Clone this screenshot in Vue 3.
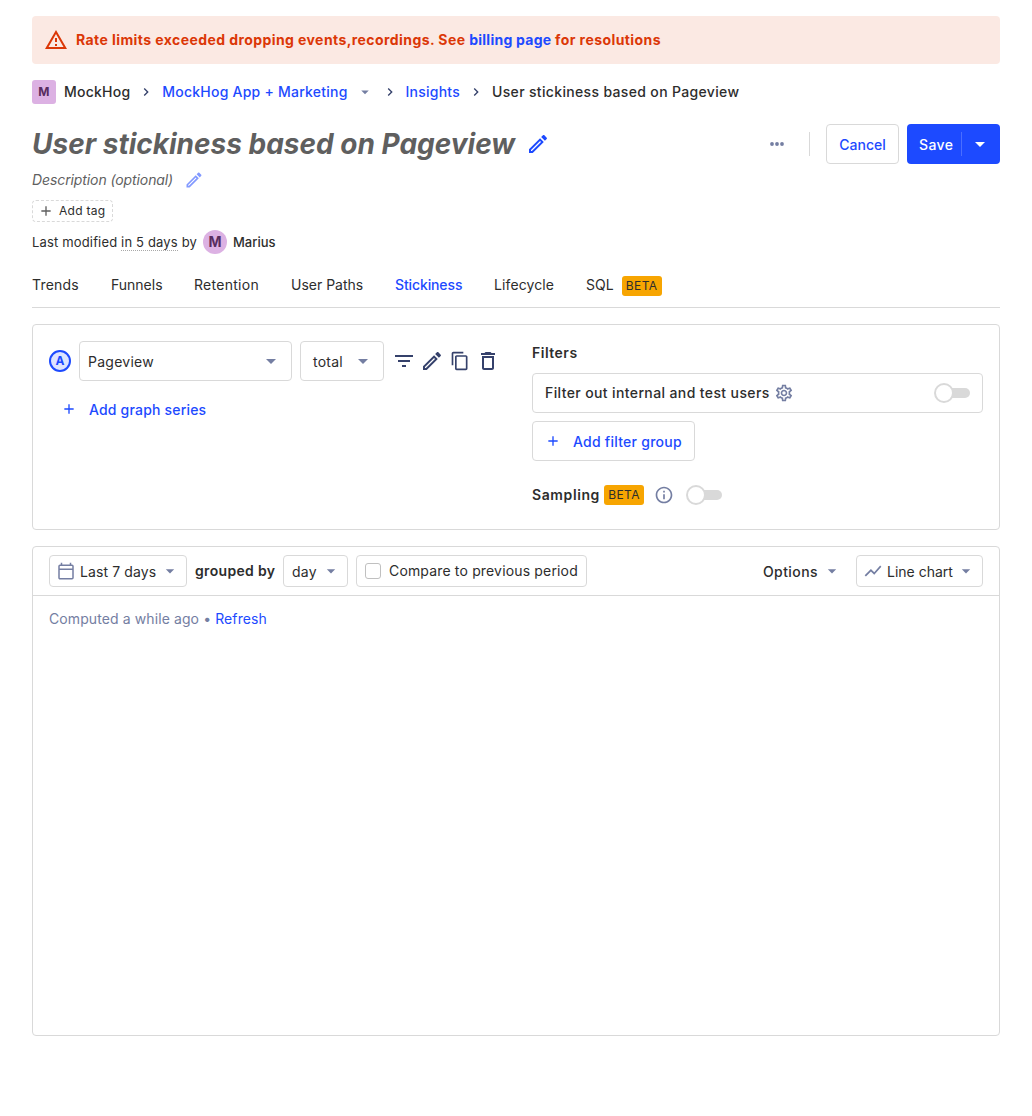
<script setup>
const tabs = ['Trends', 'Funnels', 'Retention', 'User Paths', 'Stickiness', 'Lifecycle', 'SQL']
const activeTab = 'Stickiness'

const pencil = 'M14.06 9l.94.94L5.92 19H5v-.92L14.06 9m3.6-6c-.25 0-.51.1-.7.29l-1.83 1.83 3.75 3.75 1.83-1.83c.39-.39.39-1.04 0-1.41l-2.34-2.34c-.2-.2-.45-.29-.71-.29m-3.6 3.19L3 17.25V21h3.75L17.81 9.94l-3.75-3.75z'
const caret = 'M7 10l5 5 5-5z'
const plus = 'M19 13h-6v6h-2v-6H5v-2h6V5h2v6h6v2z'
const chevron = 'M8.59 16.59L13.17 12 8.59 7.41 10 6l6 6-6 6z'
</script>

<template>
  <div class="scene">
    <div class="banner">
      <svg class="i24" viewBox="0 0 24 24"><path d="M12 5.99L19.53 19H4.47L12 5.99M12 2L1 21h22L12 2zm1 14h-2v2h2v-2zm0-6h-2v4h2v-4z" /></svg>
      <div class="banner-text">Rate limits exceeded dropping events,recordings. See <a>billing page</a> for resolutions</div>
    </div>

    <nav class="crumbs">
      <span class="lettermark">M</span>
      <span class="org">MockHog</span>
      <svg class="chev" viewBox="0 0 24 24"><path :d="chevron" /></svg>
      <a>MockHog App + Marketing</a>
      <svg class="crumb-caret" viewBox="0 0 24 24"><path :d="caret" /></svg>
      <svg class="chev after-caret" viewBox="0 0 24 24"><path :d="chevron" /></svg>
      <a>Insights</a>
      <svg class="chev" viewBox="0 0 24 24"><path :d="chevron" /></svg>
      <span class="here">User stickiness based on Pageview</span>
    </nav>

    <header class="title-row">
      <h1>User stickiness based on Pageview</h1>
      <svg class="i24 title-edit" viewBox="0 0 24 24"><path :d="pencil" /></svg>
      <div class="actions">
        <svg class="i20 more" viewBox="0 0 20 20"><circle cx="5" cy="10" r="1.9" /><circle cx="10" cy="10" r="1.9" /><circle cx="15" cy="10" r="1.9" /></svg>
        <span class="divider"></span>
        <button class="btn cancel">Cancel</button>
        <button class="btn save">
          <span class="save-label">Save</span>
          <span class="save-side"><svg class="i24" viewBox="0 0 24 24"><path :d="caret" /></svg></span>
        </button>
      </div>
    </header>

    <div class="description">
      <i>Description (optional)</i>
      <svg class="i20" viewBox="0 0 24 24"><path :d="pencil" /></svg>
    </div>

    <div class="tag">
      <svg viewBox="0 0 24 24"><path :d="plus" /></svg>
      <span>Add tag</span>
    </div>

    <div class="modified">
      <span>Last modified <span class="dotted">in 5 days</span> by</span>
      <span class="avatar">M</span>
      <b>Marius</b>
    </div>

    <div class="tabs">
      <div v-for="t in tabs" :key="t" class="tab" :class="[t.toLowerCase().replace(' ', '-'), { active: t === activeTab }]">
        {{ t }}<span v-if="t === 'SQL'" class="beta">BETA</span>
      </div>
    </div>

    <section class="panel query">
      <div class="series-col">
        <div class="series">
          <span class="letter">A</span>
          <div class="select event"><span>Pageview</span><svg class="i24" viewBox="0 0 24 24"><path :d="caret" /></svg></div>
          <div class="select math"><span>total</span><svg class="i24" viewBox="0 0 24 24"><path :d="caret" /></svg></div>
          <div class="series-icons">
            <svg class="i24" viewBox="0 0 24 24"><path d="M10 18h4v-2h-4v2zM3 6v2h18V6H3zm3 7h12v-2H6v2z" /></svg>
            <svg class="i24" viewBox="0 0 24 24"><path :d="pencil" /></svg>
            <svg class="i20" viewBox="0 0 24 24"><path d="M16 1H4c-1.1 0-2 .9-2 2v14h2V3h12V1zm3 4H8c-1.1 0-2 .9-2 2v14c0 1.1.9 2 2 2h11c1.1 0 2-.9 2-2V7c0-1.1-.9-2-2-2zm0 16H8V7h11v14z" /></svg>
            <svg class="i24" viewBox="0 0 24 24"><path d="M6 19c0 1.1.9 2 2 2h8c1.1 0 2-.9 2-2V7H6v12zM8 9h8v10H8V9zm7.5-5l-1-1h-5l-1 1H5v2h14V4h-3.5z" /></svg>
          </div>
        </div>
        <div class="add-series">
          <svg class="plus" viewBox="0 0 24 24"><path :d="plus" /></svg>
          <span>Add graph series</span>
        </div>
      </div>

      <div class="filter-col">
        <b class="heading">Filters</b>
        <div class="internal">
          <span class="internal-label">Filter out internal and test users</span>
          <svg class="i20 gear" viewBox="0 0 24 24"><path d="M19.43 12.98c.04-.32.07-.64.07-.98 0-.34-.03-.66-.07-.98l2.11-1.65c.19-.15.24-.42.12-.64l-2-3.46c-.09-.16-.26-.25-.44-.25-.06 0-.12.01-.17.03l-2.49 1c-.52-.4-1.08-.73-1.69-.98l-.38-2.65C14.46 2.18 14.25 2 14 2h-4c-.25 0-.46.18-.49.42l-.38 2.65c-.61.25-1.17.59-1.69.98l-2.49-1c-.06-.02-.12-.03-.18-.03-.17 0-.34.09-.43.25l-2 3.46c-.13.22-.07.49.12.64l2.11 1.65c-.04.32-.07.65-.07.98 0 .33.03.66.07.98l-2.11 1.65c-.19.15-.24.42-.12.64l2 3.46c.09.16.26.25.44.25.06 0 .12-.01.17-.03l2.49-1c.52.4 1.08.73 1.69.98l.38 2.65c.03.24.24.42.49.42h4c.25 0 .46-.18.49-.42l.38-2.65c.61-.25 1.17-.59 1.69-.98l2.49 1c.06.02.12.03.18.03.17 0 .34-.09.43-.25l2-3.46c.12-.22.07-.49-.12-.64l-2.11-1.65zm-1.98-1.71c.04.31.05.52.05.73 0 .21-.02.43-.05.73l-.14 1.13.89.7 1.08.84-.7 1.21-1.27-.51-1.04-.42-.9.68c-.43.32-.84.56-1.25.73l-1.06.43-.16 1.13-.2 1.35h-1.4l-.19-1.35-.16-1.13-1.06-.43c-.43-.18-.83-.41-1.23-.71l-.91-.7-1.06.43-1.27.51-.7-1.21 1.08-.84.89-.7-.14-1.13c-.03-.31-.05-.54-.05-.74s.02-.43.05-.73l.14-1.13-.89-.7-1.08-.84.7-1.21 1.27.51 1.04.42.9-.68c.43-.32.84-.56 1.25-.73l1.06-.43.16-1.13.2-1.35h1.39l.19 1.35.16 1.13 1.06.43c.43.18.83.41 1.23.71l.91.7 1.06-.43 1.27-.51.7 1.21-1.07.85-.89.7.14 1.13zM12 8c-2.21 0-4 1.79-4 4s1.79 4 4 4 4-1.79 4-4-1.79-4-4-4zm0 6c-1.1 0-2-.9-2-2s.9-2 2-2 2 .9 2 2-.9 2-2 2z" /></svg>
          <span class="switch push"><span class="knob"></span></span>
        </div>
        <div class="add-filter">
          <svg class="plus" viewBox="0 0 24 24"><path :d="plus" /></svg>
          <span>Add filter group</span>
        </div>
        <div class="sampling">
          <b>Sampling</b>
          <span class="beta">BETA</span>
          <svg class="i20 info" viewBox="0 0 24 24"><path d="M11 7h2v2h-2V7zm0 4h2v6h-2v-6zm1-9C6.48 2 2 6.48 2 12s4.48 10 10 10 10-4.48 10-10S17.52 2 12 2zm0 18c-4.41 0-8-3.59-8-8s3.59-8 8-8 8 3.59 8 8-3.59 8-8 8z" /></svg>
          <span class="switch"><span class="knob"></span></span>
        </div>
      </div>
    </section>

    <section class="panel results">
      <div class="toolbar">
        <div class="small date">
          <svg class="i20 calendar" viewBox="0 0 24 24"><rect x="3.6" y="5" width="16.8" height="16.2" rx="1.2" /><path d="M3.6 9.8h16.8M6.6 2v3M17.4 2v3" /></svg>
          <span>Last 7 days</span>
          <svg class="i20 caret" viewBox="0 0 24 24"><path :d="caret" /></svg>
        </div>
        <b class="grouped">grouped by</b>
        <div class="small day"><span>day</span><svg class="i20 caret" viewBox="0 0 24 24"><path :d="caret" /></svg></div>
        <div class="small compare"><span class="checkbox"></span><span class="compare-label">Compare to previous period</span></div>
        <div class="options"><span>Options</span><svg class="i20 caret" viewBox="0 0 24 24"><path :d="caret" /></svg></div>
        <div class="small chart">
          <svg class="i20" viewBox="0 0 24 24"><path d="M3.5 18.49l6-6.01 4 4L22 6.92l-1.41-1.41-7.09 7.97-4-4L2 16.99z" /></svg>
          <span>Line chart</span>
          <svg class="i20 caret" viewBox="0 0 24 24"><path :d="caret" /></svg>
        </div>
      </div>
      <div class="computed">Computed a while ago <span>•</span> <a>Refresh</a></div>
    </section>
  </div>
</template>

<style>
body { margin: 0; background: #fff; }
</style>

<style scoped>
.scene { box-sizing: border-box; padding: 16px 32px 80px; width: 1032px; height: 1116px; font: 14px/20px Inter, sans-serif; color: #2d2d2d; white-space: nowrap; }
.scene * { box-sizing: border-box; }
svg { display: block; flex: none; fill: currentColor; }
a { color: #1d4aff; }
.i24 { width: 24px; height: 24px; }
.i20 { width: 20px; height: 20px; }
b { font-weight: 600; }

.banner { display: flex; align-items: center; height: 48px; padding: 0 12px; border-radius: 4px; background: #fbe9e3; color: #db3707; font-weight: 700; }
.banner-text { margin-left: 8px; letter-spacing: 0.42px; }
.banner-text a { letter-spacing: 0.25px; }

.crumbs { display: flex; align-items: center; height: 24px; margin-top: 16px; font-weight: 500; letter-spacing: 0.23px; }
.lettermark { width: 24px; height: 24px; border-radius: 3px; background: #dcb1e3; color: #572c5f; font-size: 12px; font-weight: 700; line-height: 24px; text-align: center; }
.org { margin-left: 8px; }
.here { letter-spacing: 0.34px; }
.chev { width: 16px; height: 16px; margin: 0 8px; color: #35416b; }
.crumb-caret { width: 18px; height: 18px; margin-left: 8px; color: #747ea2; }
.after-caret { margin-left: 8px; }

.title-row { display: flex; align-items: center; height: 40px; margin-top: 20px; }
h1 { margin: 0; font-size: 28px; font-weight: 700; font-style: italic; line-height: 40px; color: #5f5f5f; }
.title-edit { margin-left: 11px; color: #1d4aff; }
.actions { display: flex; align-items: center; margin-left: auto; }
.more { color: #747ea2; margin-right: 22px; }
.divider { width: 1px; height: 24px; background: #d9d9d9; margin-right: 16px; }
.btn { display: flex; align-items: center; height: 40px; padding: 2px 0 0; border-radius: 4px; font: 500 14px/20px Inter, sans-serif; }
.cancel { justify-content: center; width: 73px; border: 1px solid #d9d9d9; background: #fff; color: #1d4aff; }
.save { width: 93px; margin-left: 8px; padding: 0; border: 0; background: #1d4aff; color: #fff; }
.save-label { width: 54px; padding: 2px 0 0 12px; text-align: left; letter-spacing: 0.4px; }
.save-side { display: flex; align-items: center; width: 39px; height: 24px; padding-left: 6px; border-left: 1px solid #4a6eff; }

.description { display: flex; align-items: center; height: 20px; margin-top: 6px; color: #5f5f5f; letter-spacing: -0.1px; }
.description svg { margin-left: 11px; color: #8299ff; }
.tag { display: flex; align-items: center; width: 81px; height: 22px; margin-top: 10px; padding-left: 5px; border: 1px dashed #d9d9d9; border-radius: 4px; font-size: 12px; letter-spacing: 0.28px; }
.tag svg { width: 16px; height: 16px; margin-right: 5px; color: #5f5f5f; }
.modified { display: flex; align-items: center; height: 24px; margin-top: 8px; font-size: 13px; letter-spacing: 0.16px; }
.dotted { border-bottom: 1px dotted #a8a8a8; }
.avatar { width: 24px; height: 24px; margin: 0 6px; border-radius: 50%; background: #dcb1e3; color: #572c5f; font-size: 14px; font-weight: 700; line-height: 24px; text-align: center; letter-spacing: 0; }
.modified b { font-weight: 500; letter-spacing: 0; }

.tabs { display: flex; gap: 32px; height: 46px; margin-top: 8px; padding-top: 13px; border-bottom: 1px solid #d9d9d9; }
.tab { display: flex; height: 20px; }
.tab .beta { margin: 1px 0 0 8px; }
.trends { width: 47px; letter-spacing: 0.2px; }
.funnels { width: 51px; }
.retention { width: 65px; letter-spacing: 0.28px; }
.user-paths { width: 72px; }
.stickiness { width: 67px; letter-spacing: -0.12px; }
.lifecycle { width: 60px; letter-spacing: 0.1px; }
.active { color: #1d4aff; font-weight: 500; }
.beta { width: 40px; height: 20px; border-radius: 3px; background: #f7a501; color: #2d2d2d; font-size: 12px; line-height: 20px; text-align: center; letter-spacing: 0.4px; }

.panel { border: 1px solid #d9d9d9; border-radius: 4px; margin-top: 16px; }
.query { display: flex; height: 206px; padding: 16px; }
.series-col { width: 483px; }
.series { display: flex; align-items: center; height: 40px; }
.letter { width: 22px; height: 22px; border: 2px solid #1d4aff; border-radius: 50%; background: #dde4ff; color: #1d4aff; font-size: 12px; font-weight: 700; line-height: 18px; text-align: center; }
.select { display: flex; align-items: center; justify-content: space-between; height: 40px; margin-left: 8px; border: 1px solid #d9d9d9; border-radius: 4px; letter-spacing: 0.25px; }
.select span { padding-top: 2px; }
.select svg, .caret { color: #747ea2; }
.event { width: 213px; padding: 0 8px; }
.math { width: 84px; padding: 0 8px 0 12px; }
.series-icons { display: flex; align-items: center; margin-left: 8px; gap: 4px; color: #35416b; }
.series-icons .i20 { margin: 0 2px; }
.add-series { display: flex; align-items: center; height: 40px; margin-top: 8px; padding-left: 12px; color: #1d4aff; font-weight: 500; letter-spacing: 0.19px; }
.plus { width: 16px; height: 16px; margin-right: 12px; }
.add-series span, .add-filter span { padding-top: 2px; }

.filter-col { flex: 1; }
.heading { display: block; height: 20px; margin: 2px 0 10px; letter-spacing: 0.5px; }
.internal { display: flex; align-items: center; height: 40px; padding: 0 12px; border: 1px solid #d9d9d9; border-radius: 4px; font-weight: 500; }
.internal-label { letter-spacing: 0.38px; }
.gear { margin-left: 4px; color: #747ea2; }
.switch { position: relative; width: 36px; height: 20px; }
.switch::before { content: ""; position: absolute; left: 2px; right: 0; top: 5px; height: 10px; border-radius: 5px; background: #d9d9d9; }
.knob { position: absolute; left: 0; top: 0; width: 20px; height: 20px; border: 2px solid #d9d9d9; border-radius: 50%; background: #fff; }
.push { margin-left: auto; }
.add-filter { display: flex; align-items: center; width: 163px; height: 40px; margin-top: 8px; padding-left: 12px; border: 1px solid #d9d9d9; border-radius: 4px; color: #1d4aff; font-weight: 500; letter-spacing: 0.25px; }
.sampling { display: flex; align-items: center; height: 20px; margin-top: 24px; }
.sampling b { width: 68px; letter-spacing: 0.6px; }
.sampling .beta { margin-left: 4px; }
.info { margin: 0 12px 0 10px; color: #747ea2; }

.results { height: 490px; }
.toolbar { display: flex; align-items: center; height: 49px; padding: 0 16px; border-bottom: 1px solid #d9d9d9; }
.small { display: flex; align-items: center; height: 32px; border: 1px solid #d9d9d9; border-radius: 4px; }
.small > span, .options > span { padding-top: 2px; }
.date, .chart { padding-left: 6px; color: #2d2d2d; }
.date { width: 138px; letter-spacing: 0.1px; }
.date svg:first-child, .chart svg:first-child { margin-right: 4px; color: #747ea2; }
.calendar { fill: none; stroke: currentColor; stroke-width: 1.8; }
.caret { margin-left: 4px; }
.grouped { width: 80px; margin: 0 8px; letter-spacing: 0.32px; }
.day { width: 65px; padding-left: 8px; letter-spacing: 0.25px; }
.compare { width: 231px; margin-left: 8px; padding-left: 8px; }
.small.compare > span { padding: 0; }
.compare-label { letter-spacing: 0.16px; }
.compare .checkbox { width: 16px; height: 16px; margin-right: 8px; border: 1px solid #c0c0c0; border-radius: 3px; }
.options { display: flex; align-items: center; margin-left: auto; font-weight: 500; letter-spacing: 0.42px; }
.chart { width: 127px; margin-left: 14px; }
.chart .caret { margin-left: 3px; }
.computed { padding: 13px 16px; color: #747ea2; letter-spacing: 0.1px; }
</style>
